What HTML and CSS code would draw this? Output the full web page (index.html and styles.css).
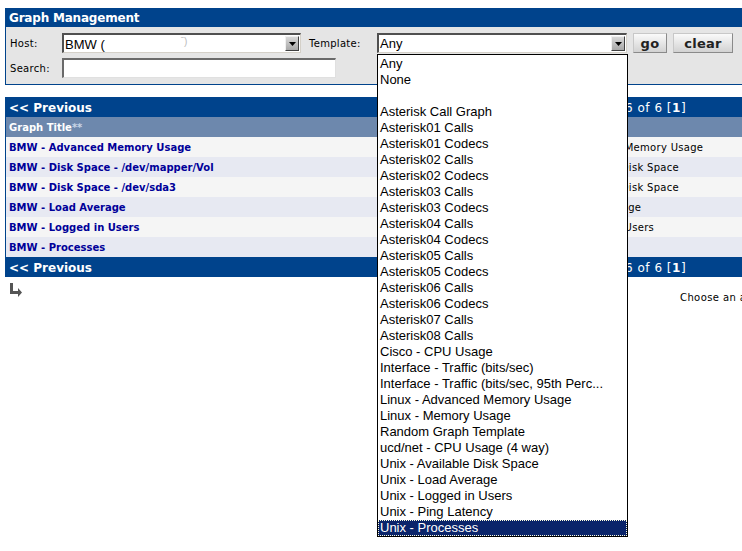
FILE: index.html
```html
<!DOCTYPE html>
<html>
<head>
<meta charset="utf-8">
<link rel="stylesheet" href="styles.css">
</head>
<body>
<div class="page">
  <div class="filter-box">
    <div class="box-title">Graph Management</div>
    <div class="filters">
      <div class="frow">
        <span class="lbl">Host:</span>
        <div class="select host-select"><span class="sel-text">BMW (<span class="ghost">ˉ)</span></span><span class="sel-btn"><svg width="7" height="4" viewBox="0 0 7 4"><path d="M0 0h7L3.5 4z" fill="#000"/></svg></span></div>
        <span class="lbl tpl-lbl">Template:</span>
        <div class="select tpl-select"><span class="sel-text">Any</span><span class="sel-btn"><svg width="7" height="4" viewBox="0 0 7 4"><path d="M0 0h7L3.5 4z" fill="#000"/></svg></span></div>
        <span class="btn btn-go">go</span>
        <span class="btn btn-clear">clear</span>
      </div>
      <div class="frow">
        <span class="lbl">Search:</span>
        <div class="input"></div>
      </div>
    </div>
  </div>

  <div class="list-box">
    <div class="nav"><span class="nav-prev">&lt;&lt; Previous</span><span class="nav-mid">Showing Rows 1 to 6 of 6 [<b>1</b>]</span></div>
    <div class="row head"><span>Graph Title<span class="stars">**</span></span><span></span></div>
    <div class="row odd"><a>BMW - Advanced Memory Usage</a><span class="tpl">Unix - Advanced Memory Usage</span></div>
    <div class="row even"><a>BMW - Disk Space - /dev/mapper/Vol</a><span class="tpl">Unix - Available Disk Space</span></div>
    <div class="row odd"><a>BMW - Disk Space - /dev/sda3</a><span class="tpl">Unix - Available Disk Space</span></div>
    <div class="row even"><a>BMW - Load Average</a><span class="tpl">Unix - Load Average</span></div>
    <div class="row odd"><a>BMW - Logged in Users</a><span class="tpl">Unix - Logged in Users</span></div>
    <div class="row even"><a>BMW - Processes</a><span class="tpl">Unix - Processes</span></div>
    <div class="nav"><span class="nav-prev">&lt;&lt; Previous</span><span class="nav-mid">Showing Rows 1 to 6 of 6 [<b>1</b>]</span></div>
  </div>

  <div class="actions">
    <svg class="arrow" width="14" height="14" viewBox="0 0 14 14"><path d="M1 0h3v8h5V5l4 4.5L9 14v-3H1z" fill="#555"/></svg>
    <span class="choose">Choose an action:</span>
  </div>

  <ul class="dropdown">
    <li>Any</li>
    <li>None</li>
    <li>&nbsp;</li>
    <li>Asterisk Call Graph</li>
    <li>Asterisk01 Calls</li>
    <li>Asterisk01 Codecs</li>
    <li>Asterisk02 Calls</li>
    <li>Asterisk02 Codecs</li>
    <li>Asterisk03 Calls</li>
    <li>Asterisk03 Codecs</li>
    <li>Asterisk04 Calls</li>
    <li>Asterisk04 Codecs</li>
    <li>Asterisk05 Calls</li>
    <li>Asterisk05 Codecs</li>
    <li>Asterisk06 Calls</li>
    <li>Asterisk06 Codecs</li>
    <li>Asterisk07 Calls</li>
    <li>Asterisk08 Calls</li>
    <li>Cisco - CPU Usage</li>
    <li>Interface - Traffic (bits/sec)</li>
    <li>Interface - Traffic (bits/sec, 95th Perc...</li>
    <li>Linux - Advanced Memory Usage</li>
    <li>Linux - Memory Usage</li>
    <li>Random Graph Template</li>
    <li>ucd/net - CPU Usage (4 way)</li>
    <li>Unix - Available Disk Space</li>
    <li>Unix - Load Average</li>
    <li>Unix - Logged in Users</li>
    <li>Unix - Ping Latency</li>
    <li class="selected">Unix - Processes</li>
  </ul>
</div>
</body>
</html>
```

FILE: styles.css
```css
html {
  overflow: hidden;
}
html, body {
  margin: 0;
  padding: 0;
  background: #fff;
}
body {
  font-family: "DejaVu Sans", Verdana, sans-serif;
  font-size: 10px;
  color: #000;
  min-height: 551px;
}
.page {
  position: relative;
  width: 1200px;
  padding: 8px 0 0 5px;
}
.filter-box {
  border-left: 1px solid #00438c;
  border-bottom: 1px solid #00438c;
}
.box-title {
  background: #00438c;
  color: #fff;
  font-weight: bold;
  font-size: 12px;
  height: 19px;
  line-height: 20px;
  padding-left: 4px;
  margin-left: -1px;
  letter-spacing: -0.2px;
}
.filters {
  background: #e5e5e5;
  padding: 6px 0 6px 4px;
  display: flex;
  flex-direction: column;
  gap: 5px;
}
.frow {
  display: flex;
  align-items: center;
  height: 20px;
}
.lbl {
  width: 52px;
  font-size: 10px;
  letter-spacing: 0.3px;
}
.tpl-lbl {
  width: 68px;
  margin-left: 8px;
}
.select {
  box-sizing: border-box;
  height: 20px;
  background: #fff;
  border-top: 2px solid #505050;
  border-left: 2px solid #505050;
  border-right: 1px solid #d4d0c8;
  border-bottom: 1px solid #d4d0c8;
  display: flex;
  align-items: center;
  font-family: "Liberation Sans", Arial, sans-serif;
  font-size: 13px;
}
.host-select { width: 239px; }
.tpl-select { width: 250px; }
.sel-text {
  flex: 1;
  padding-left: 1px;
  white-space: nowrap;
}
.ghost {
  color: #bbb;
  font-size: 10px;
  margin-left: 76px;
  vertical-align: 4px;
}
.sel-btn {
  width: 14px;
  height: 15px;
  margin-right: 1px;
  box-sizing: border-box;
  border: 1px solid;
  border-color: #f0f0f0 #404040 #404040 #f0f0f0;
  background: linear-gradient(#d8d8d8, #a8a8a8);
  display: flex;
  align-items: center;
  justify-content: center;
}
.btn {
  box-sizing: border-box;
  height: 20px;
  border: 1px solid;
  border-color: #c8c8c8 #8a8a8a #8a8a8a #c8c8c8;
  background: linear-gradient(#fafafa, #d2d2d2);
  font-weight: bold;
  font-size: 13px;
  color: #222;
  display: flex;
  align-items: center;
  justify-content: center;
  letter-spacing: 0.3px;
}
.btn-go { width: 34px; margin-left: 6px; }
.btn-clear { width: 60px; margin-left: 6px; }
.input {
  box-sizing: border-box;
  width: 274px;
  height: 20px;
  background: #fff;
  border-top: 2px solid #6a6a6a;
  border-left: 2px solid #6a6a6a;
  border-right: 1px solid #e0e0e0;
  border-bottom: 1px solid #e0e0e0;
}
.list-box {
  margin-top: 12px;
  border-left: 1px solid #00438c;
}
.nav {
  background: #00438c;
  color: #fff;
  height: 20px;
  display: grid;
  grid-template-columns: 494px auto;
  align-items: center;
  font-size: 12px;
  margin-left: -1px;
  padding-top: 2px;
  box-sizing: border-box;
}
.nav-prev {
  font-weight: bold;
  padding-left: 4px;
}
.nav-mid {
  letter-spacing: 0.5px;
}
.nav-mid b { font-weight: bold; }
.row {
  height: 20px;
  box-sizing: border-box;
  padding-top: 1px;
  display: grid;
  grid-template-columns: 526px auto;
  align-items: center;
  padding-left: 3px;
  white-space: nowrap;
}
.row a {
  color: #000099;
  font-weight: bold;
}
.row .tpl {
  letter-spacing: 0.3px;
}
.head {
  background: #6d88ad;
  color: #fff;
  font-weight: bold;
}
.stars { color: #c8d4e6; }
.odd { background: #f5f5f5; }
.even { background: #e7e9f2; }
.actions {
  display: grid;
  grid-template-columns: 671px auto;
  height: 26px;
  padding-left: 4px;
}
.arrow { margin-top: 6px; }
.choose {
  letter-spacing: 0.4px;
  margin-top: 15px;
  white-space: nowrap;
}
.dropdown {
  position: absolute;
  left: 377px;
  top: 54px;
  width: 251px;
  box-sizing: border-box;
  margin: 0;
  padding: 1px 0 0;
  list-style: none;
  background: #fff;
  border: 1px solid #000;
  font-family: "Liberation Sans", Arial, sans-serif;
  font-size: 13px;
}
.dropdown li {
  height: 16px;
  line-height: 16px;
  padding-left: 2px;
  white-space: nowrap;
}
.dropdown li.selected {
  background: #0a246a;
  color: #fff;
  outline: 1px dotted #ffd;
  outline-offset: -1px;
}
```
